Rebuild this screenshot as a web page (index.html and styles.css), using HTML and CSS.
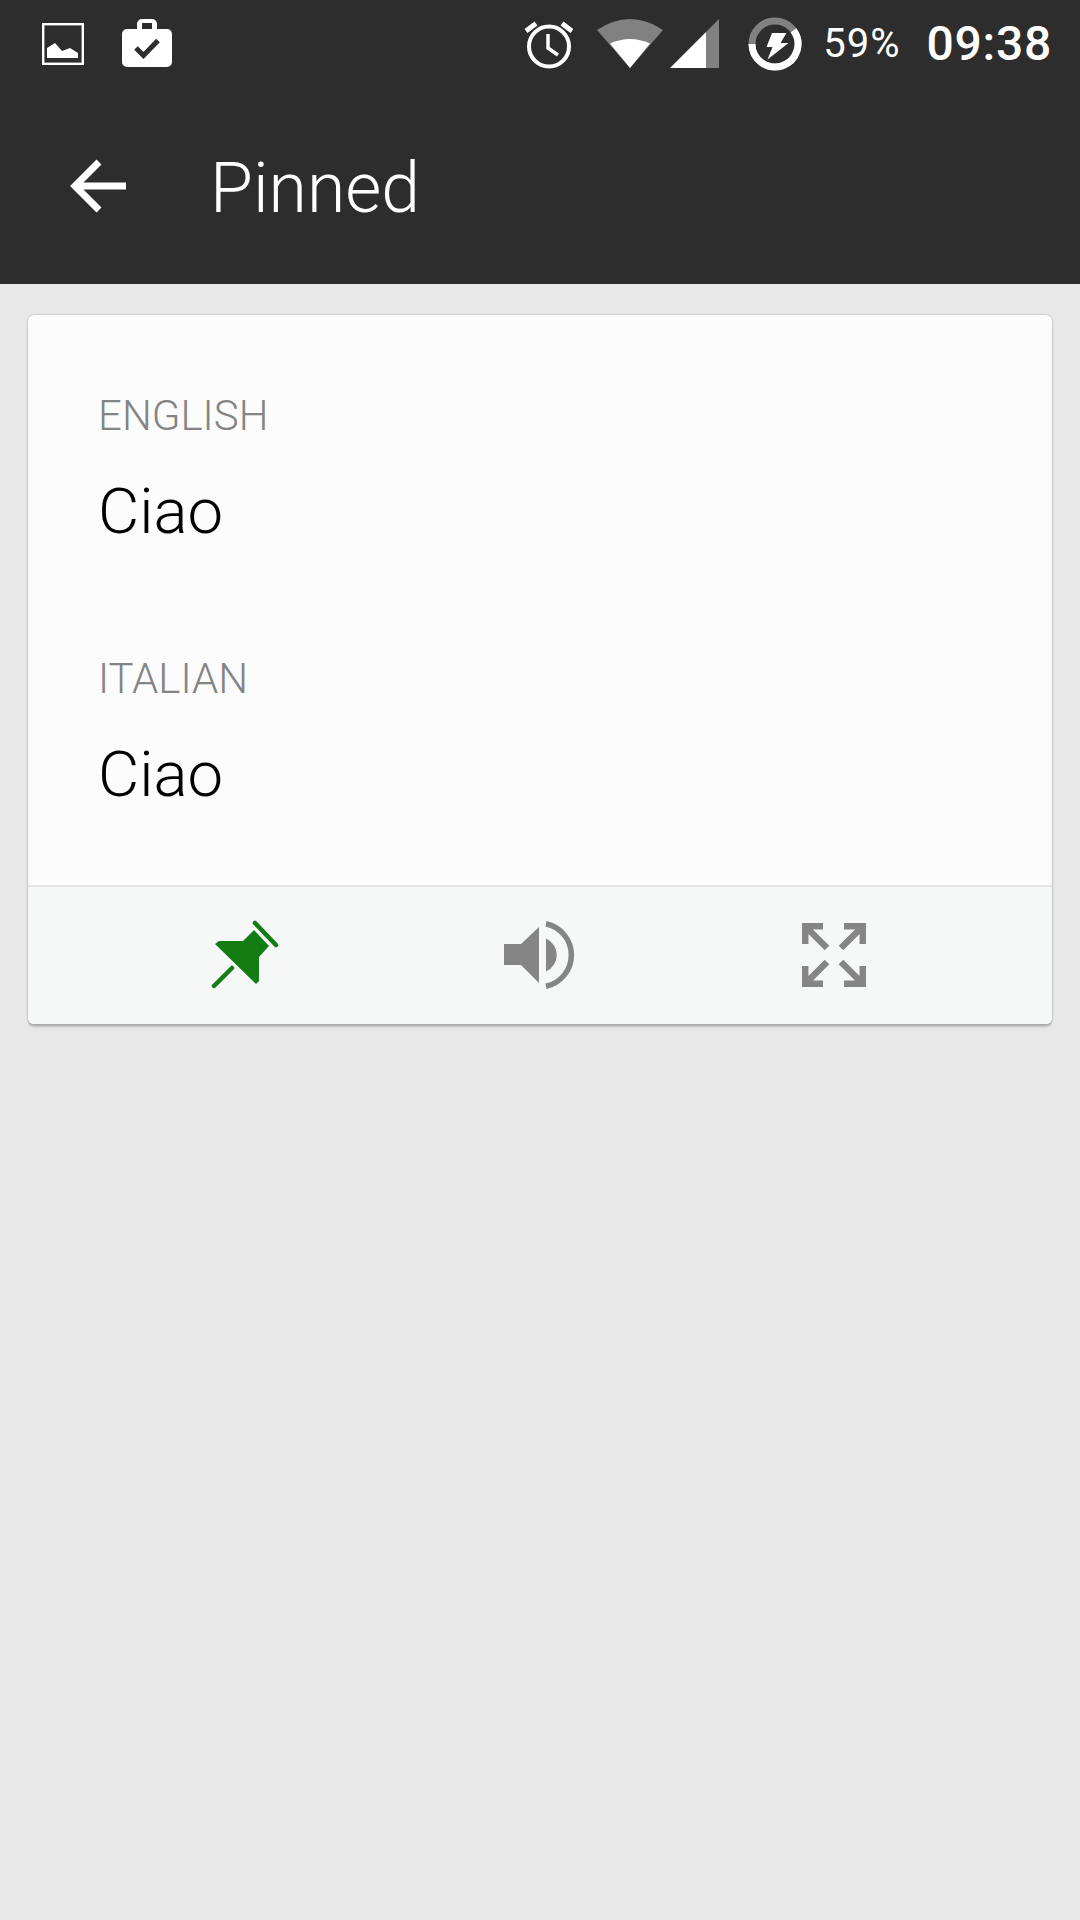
FILE: index.html
```html
<!DOCTYPE html>
<html lang="en">
<head>
<meta charset="utf-8">
<title>Pinned</title>
<link rel="stylesheet" href="styles.css">
</head>
<body>
<header class="appbar">
  <div class="status">
    <svg class="ic-image" viewBox="0 0 42 42"><rect x="1.200" y="1.200" width="39.600" height="39.600" fill="none" stroke="#fff" stroke-width="2.400"/><path d="M5 35V25l8-5 7 8 8-3 8 5v5z" fill="#fff"/></svg>
    <svg class="ic-case" viewBox="0 0 50 48"><path fill-rule="evenodd" fill="#fff" d="M15 10V5a5 5 0 0 1 5-5h10a5 5 0 0 1 5 5v5h10a5 5 0 0 1 5 5v28a5 5 0 0 1-5 5H5a5 5 0 0 1-5-5V15a5 5 0 0 1 5-5zM20 4v6h10V4z"/><path d="M14 29l7.500 7.500L36 21.500" fill="none" stroke="#2d2d2d" stroke-width="5"/></svg>
    <span class="grow"></span>
    <svg class="ic-alarm" viewBox="0 0 50 50"><g fill="none" stroke="#fff"><circle cx="26" cy="26.500" r="20" stroke-width="4"/><path d="M25 14V28l10 7" stroke-width="3.500"/><path d="M3 11L13 3.500M49 11L39 3.500" stroke-width="5"/></g></svg>
    <svg class="ic-wifi" viewBox="0 0 68 49"><path d="M1 11Q34-11 67 11L34 49z" fill="#fff" fill-opacity=".4"/><path d="M14 24.500Q34 15.500 54 24.500L34 49z" fill="#fff"/></svg>
    <svg class="ic-signal" viewBox="0 0 49 49"><path d="M0 49L36 13V49z" fill="#fff"/><path d="M36 13L49 0V49H36z" fill="#fff" fill-opacity=".4"/></svg>
    <svg class="ic-battery" viewBox="0 0 54 54"><circle cx="27" cy="27" r="23" fill="none" stroke="#fff" stroke-opacity=".4" stroke-width="7"/><path d="M45.500 13.300A23 23 0 1 1 4 27" fill="none" stroke="#fff" stroke-width="7"/><path d="M24 16h14.500l-6 10h8L19.500 42.500l5-12.500h-6z" fill="#fff"/></svg>
    <span class="pct">59%</span>
    <span class="clock">09:38</span>
  </div>
  <div class="toolbar">
    <svg class="ic-back" viewBox="0 0 58 54"><path d="M57 27H6M30 3L6 27l24 24" fill="none" stroke="#fff" stroke-width="7"/></svg>
    <h1 class="title">Pinned</h1>
  </div>
</header>
<main class="content">
  <section class="card">
    <div class="card-body">
      <div class="lang">ENGLISH</div>
      <div class="phrase">Ciao</div>
      <div class="lang lang-second">ITALIAN</div>
      <div class="phrase">Ciao</div>
    </div>
    <div class="card-actions">
      <svg class="ic-pin" viewBox="0 0 72 72"><path d="M5 25L9 22H33L44 11 59 27 49 38V62L46 65z" fill="#137c13"/><path d="M45 4L66 26M4 67L22 49" fill="none" stroke="#137c13" stroke-width="4.500" stroke-linecap="round"/></svg>
      <svg class="ic-sound" viewBox="0 0 72 72"><path d="M0 25H17L35 8V64L17 46H0z" fill="#858585"/><path d="M42 19.500A18 18 0 0 1 42 52.500z" fill="#858585"/><path d="M42 4.700A32 32 0 0 1 42 67.300" fill="none" stroke="#858585" stroke-width="5.500"/></svg>
      <svg class="ic-expand" viewBox="0 0 64 64"><g fill="none" stroke="#858585" stroke-width="6.500"><path d="M3.200 21V3.200H21M3.200 3.200L25 25"/><path d="M60.800 21V3.200H42M60.800 3.200L39 25"/><path d="M3.200 43V60.800H21M3.200 60.800L25 39"/><path d="M60.800 43V60.800H42M60.800 60.800L39 39"/></g></svg>
    </div>
  </section>
</main>
</body>
</html>
```
FILE: styles.css
```css
* { box-sizing: border-box; }
html, body { margin: 0; height: 100%; }
body {
  width: 1080px;
  height: 1920px;
  background: #e8e8e9;
  font-family: Roboto, "Noto Sans", sans-serif;
  overflow: hidden;
}
svg { display: block; flex: none; }

.appbar { height: 284px; background: #2d2d2d; color: #fff; }
.status {
  height: 88px;
  display: flex;
  align-items: center;
  padding: 0 28px 0 42px;
}
.grow { flex: 1; }
.ic-image { width: 42px; height: 42px; }
.ic-case { width: 50px; height: 48px; margin-left: 38px; margin-top: -2px; }
.ic-alarm { width: 50px; height: 50px; margin-top: 2px; }
.ic-wifi { width: 68px; height: 49px; margin-left: 23px; margin-top: -1px; }
.ic-signal { width: 49px; height: 49px; margin-left: 6px; margin-top: -1px; }
.ic-battery { width: 54px; height: 54px; margin-left: 29px; margin-top: -1px; }
.pct { font-size: 40px; font-weight: 400; margin-left: 21px; margin-top: -1px; letter-spacing: 1px; }
.clock { font-size: 48px; font-weight: 500; margin-left: 26px; margin-top: -2px; letter-spacing: .750px; }

.toolbar { height: 196px; display: flex; align-items: flex-start; padding-left: 69px; }
.ic-back { width: 58px; height: 54px; margin-top: 71px; }
.title { margin: 60px 0 0 83px; font-size: 69.700px; line-height: 80px; font-weight: 300; }

.content { padding: 31px 28px 0; }
.card {
  height: 709px;
  background: #fcfcfc;
  border-radius: 6px;
  box-shadow: 0 0 2px rgba(0,0,0,.3), 0 3px 2px rgba(0,0,0,.2);
  display: flex;
  flex-direction: column;
  overflow: hidden;
}
.card-body { height: 572px; padding: 77px 70px 0; border-bottom: 2px solid #e4e5e5; }
.lang { font-size: 42px; line-height: 48px; font-weight: 300; color: #848484; }
.lang-second { margin-top: 107px; }
.phrase { font-size: 63.500px; line-height: 72px; font-weight: 300; color: #000; margin-top: 36px; }
.card-actions {
  flex: 1;
  background: #f6f8f8;
  display: flex;
  align-items: center;
  padding-left: 182px;
}
.ic-pin { width: 72px; height: 72px; margin-top: -1px; }
.ic-sound { width: 72px; height: 72px; margin-left: 222px; margin-top: -1px; }
.ic-expand { width: 64px; height: 64px; margin-left: 226px; margin-top: -1px; }
```
